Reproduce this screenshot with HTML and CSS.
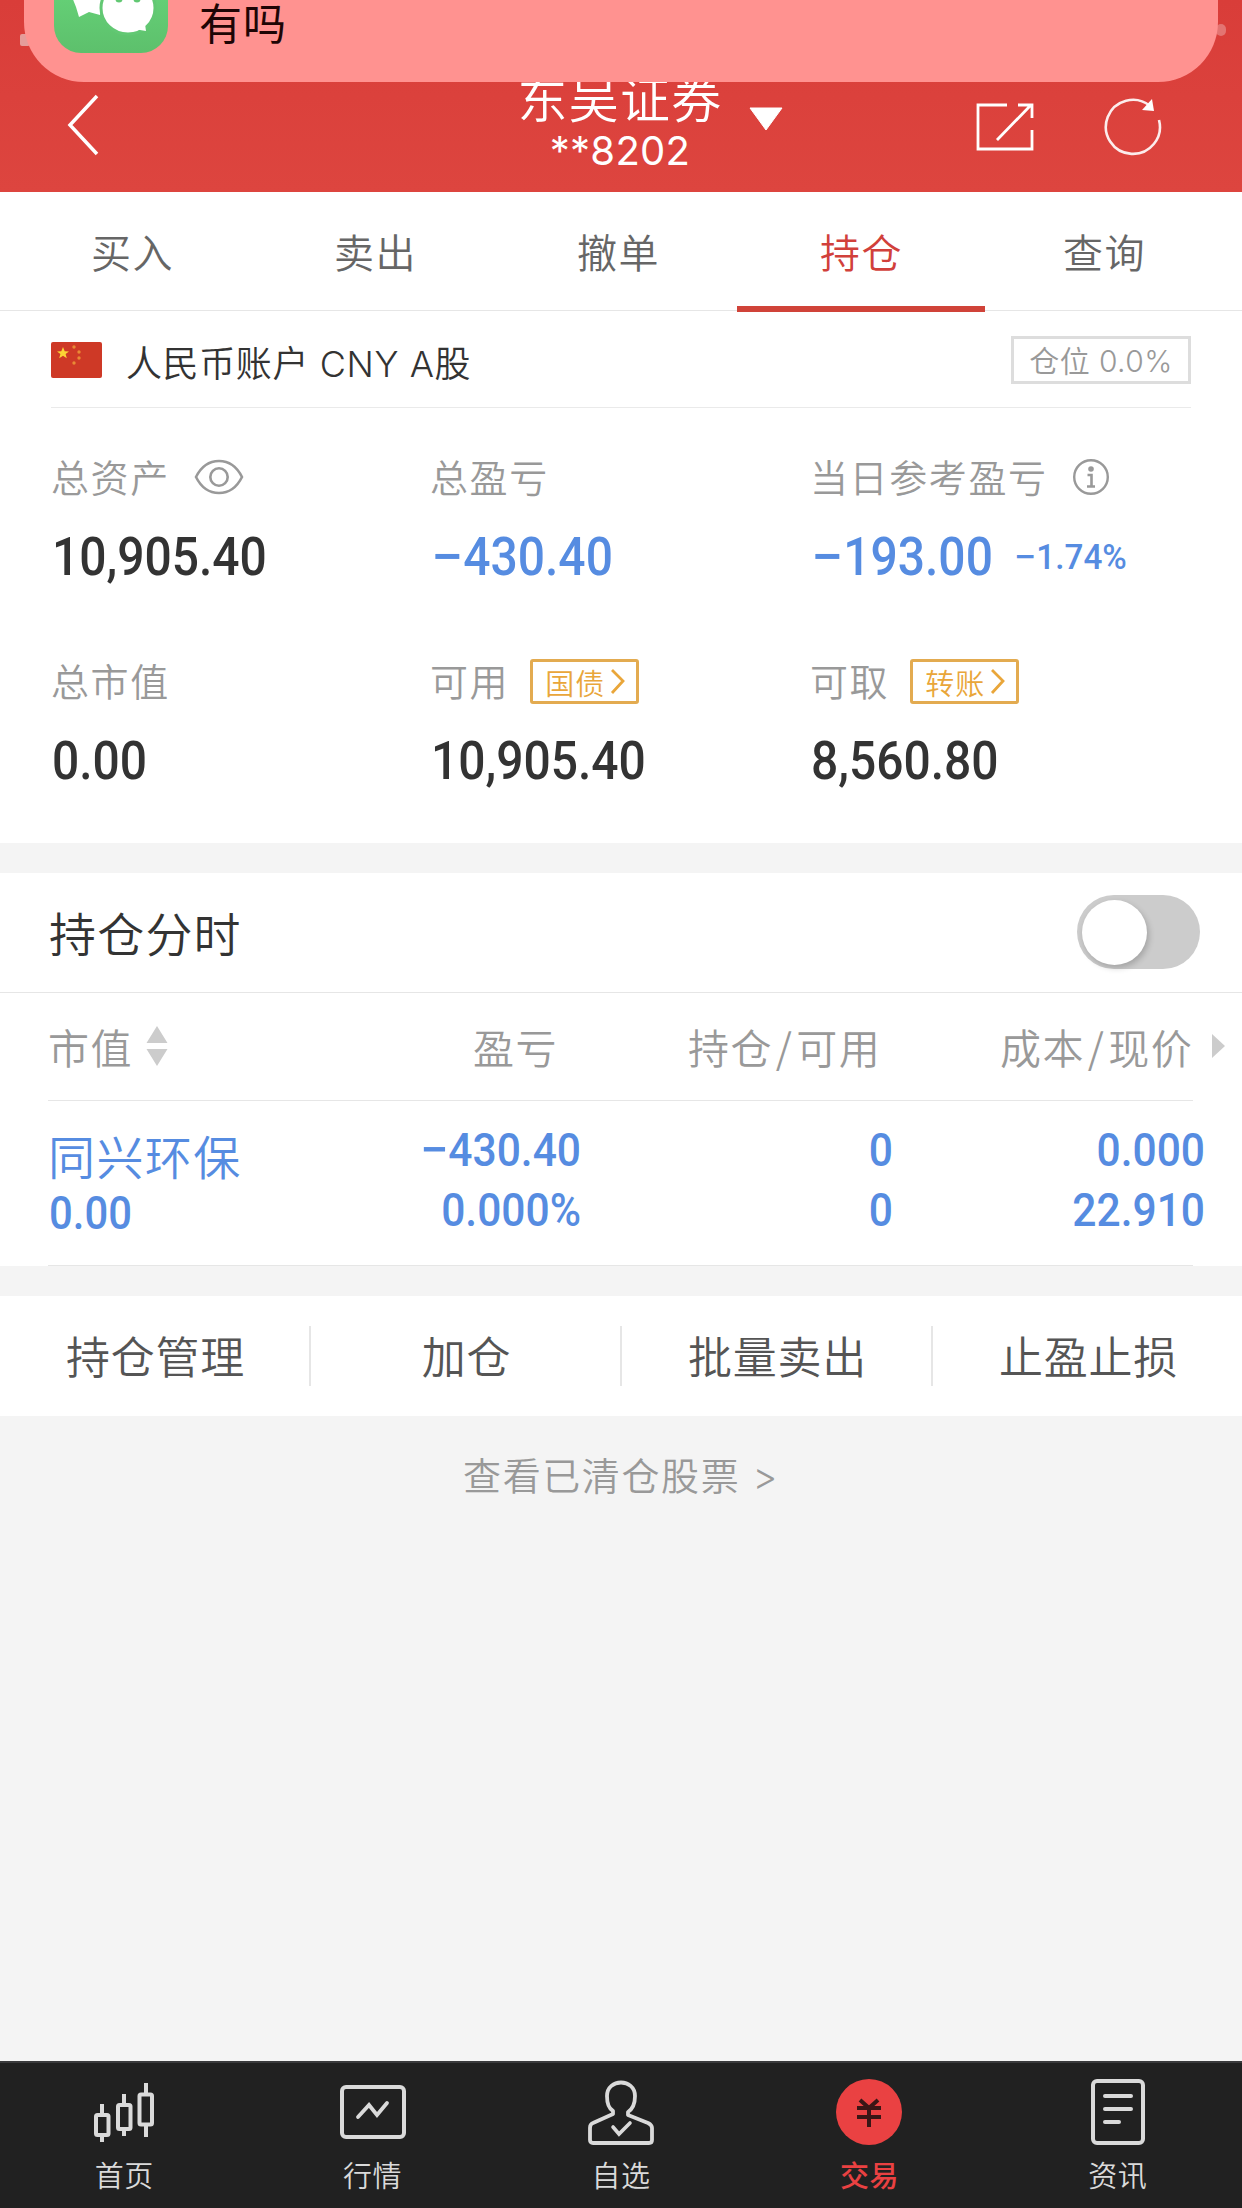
FILE: index.html
```
<!DOCTYPE html>
<html lang="zh-CN">
<head>
    <meta charset="UTF-8">
    <meta name="viewport" content="width=device-width, initial-scale=1.0">
    <title>持仓</title>
    <link rel="stylesheet" href="styles.css">
</head>
<body>

    <!-- Title bar -->
    <header class="header">
        <svg class="back" width="34" height="64" viewBox="0 0 34 64"><path d="M32 3 5 32 32 61" fill="none" stroke="#fff" stroke-width="3.5"/></svg>
        <div class="title">
            <div class="broker">东吴证券</div>
            <div class="account-no">**8202</div>
        </div>
        <svg class="caret" width="34" height="24" viewBox="0 0 34 24"><path d="M1 1H33L17 23Z" fill="#fff" stroke="#fff" stroke-linejoin="round"/></svg>
        <svg class="share" width="58" height="50" viewBox="0 0 58 50"><path d="M31 3H2V47H56V28M56 16V3H42M54 4 21 38" fill="none" stroke="#fff" stroke-width="2.8"/></svg>
        <svg class="refresh" width="60" height="60" viewBox="0 0 60 60"><path d="M57 24A27 27 0 1 1 48 10" fill="none" stroke="#fff" stroke-opacity=".9" stroke-width="2.6"/><path d="M50 3 52 15 40 14Z" fill="#fff"/></svg>
    </header>

    <!-- Message banner sliding over the title bar -->
    <span class="status-dot left"></span>
    <span class="status-dot right"></span>
    <div class="banner">
        <div class="app-icon">
            <svg width="114" height="114" viewBox="0 0 114 114">
                <path d="M18 58 22 68 25 78 35 73 46 76 50 58Z" fill="#fff"/>
                <ellipse cx="74" cy="69" rx="27" ry="26" fill="#fff" stroke="#62c873" stroke-width="3"/>
                <path d="M80 90 92 92 90 78Z" fill="#fff"/>
                <circle cx="65" cy="60" r="3.5" fill="#62c873"/>
                <circle cx="83" cy="60" r="3.5" fill="#62c873"/>
            </svg>
        </div>
        <div class="message">有吗</div>
    </div>

    <nav class="tabs">
        <div class="tab">买入</div>
        <div class="tab">卖出</div>
        <div class="tab">撤单</div>
        <div class="tab active">持仓</div>
        <div class="tab">查询</div>
    </nav>

    <section class="account">
        <svg class="flag" width="51" height="36" viewBox="0 0 51 36">
            <rect width="51" height="36" rx="2" fill="#ce3926"/>
            <path d="M12 5 13.7 9.2 18 9.4 14.6 12 15.8 16.3 12 13.8 8.2 16.3 9.4 12 6 9.4 10.3 9.2Z" fill="#fbd535"/>
            <g fill="#e98a35"><circle cx="23" cy="5" r="1.7"/><circle cx="28" cy="10" r="1.7"/><circle cx="28" cy="16" r="1.7"/><circle cx="23" cy="21" r="1.7"/></g>
        </svg>
        <div class="account-name">人民币账户 CNY A股</div>
        <div class="position-badge">仓位 0.0%</div>
    </section>

    <section class="summary">
        <div class="item">
            <div class="label">总资产
                <svg class="eye" width="50" height="36" viewBox="0 0 50 36"><g fill="none" stroke="#999" stroke-width="2.6"><path d="M2 18C7 8 15 2 25 2S43 8 48 18C43 28 35 34 25 34S7 28 2 18Z"/><circle cx="25" cy="18" r="8.7"/></g></svg>
            </div>
            <div class="value"><span class="num">10,905.40</span></div>
        </div>
        <div class="item">
            <div class="label">总盈亏</div>
            <div class="value blue"><span class="num"><i>−</i>430.40</span></div>
        </div>
        <div class="item">
            <div class="label">当日参考盈亏
                <svg class="info" width="38" height="38" viewBox="0 0 38 38"><circle cx="19" cy="19" r="16.8" fill="none" stroke="#999" stroke-width="2.4"/><circle cx="19" cy="11" r="2.8" fill="#999"/><path d="M15.5 17H19.5V28M15 28.5H23" fill="none" stroke="#999" stroke-width="2.6"/></svg>
            </div>
            <div class="value blue"><span class="num"><i>−</i>193.00</span><span class="num percent"><i>−</i>1.74%</span></div>
        </div>
        <div class="item">
            <div class="label">总市值</div>
            <div class="value"><span class="num">0.00</span></div>
        </div>
        <div class="item">
            <div class="label">可用
                <span class="link">国债<svg width="16" height="30" viewBox="0 0 16 30"><path d="M3 3 14 14 3 26" fill="none" stroke="#e9a63a" stroke-width="2.8"/></svg></span>
            </div>
            <div class="value"><span class="num">10,905.40</span></div>
        </div>
        <div class="item">
            <div class="label">可取
                <span class="link">转账<svg width="16" height="30" viewBox="0 0 16 30"><path d="M3 3 14 14 3 26" fill="none" stroke="#e9a63a" stroke-width="2.8"/></svg></span>
            </div>
            <div class="value"><span class="num">8,560.80</span></div>
        </div>
    </section>

    <!-- Holdings -->
    <section class="holdings">
        <div class="chart-row">
            <div>持仓分时</div>
            <div class="switch"><div class="knob"></div></div>
        </div>
        <div class="columns">
            <div class="col-name">市值
                <svg width="22" height="40" viewBox="0 0 22 40"><path d="M11 0 21.5 17H.5ZM11 40 .5 23H21.5Z" fill="#ccc"/></svg>
            </div>
            <div class="col-profit">盈亏</div>
            <div class="col-amount">持仓<i>/</i>可用</div>
            <div class="col-cost">成本<i>/</i>现价</div>
            <svg class="more" width="13" height="24" viewBox="0 0 13 24"><path d="M0 0 13 12 0 24Z" fill="#ccc"/></svg>
        </div>
        <div class="stock">
            <div class="stock-name">
                <div class="name">同兴环保</div>
                <div class="num">0.00</div>
            </div>
            <div class="stock-profit">
                <div class="num"><i>−</i>430.40</div>
                <div class="num">0.000%</div>
            </div>
            <div class="stock-amount">
                <div class="num">0</div>
                <div class="num">0</div>
            </div>
            <div class="stock-cost">
                <div class="num">0.000</div>
                <div class="num">22.910</div>
            </div>
        </div>
    </section>

    <section class="actions">
        <div class="action">持仓管理</div>
        <div class="action">加仓</div>
        <div class="action">批量卖出</div>
        <div class="action">止盈止损</div>
    </section>

    <div class="cleared">查看已清仓股票 &gt;</div>

    <!-- Bottom navigation -->
    <footer class="footer">
        <div class="nav">
            <svg width="66" height="80" viewBox="0 0 66 80"><g fill="none" stroke="#dadada" stroke-width="4"><rect x="5" y="38" width="12.5" height="20" rx="1.5"/><rect x="27" y="28" width="12.5" height="24" rx="1.5"/><rect x="48.5" y="17.5" width="12.5" height="30" rx="1.5"/><path d="M11 27V38M11 58V65M33 17V28M33 52V59M55 6V17M55 48V60"/></g></svg>
            <span>首页</span>
        </div>
        <div class="nav">
            <svg width="66" height="80" viewBox="0 0 66 80"><rect x="2" y="10" width="62" height="50" rx="4" fill="none" stroke="#dadada" stroke-width="4"/><path d="M18 40 29 28 37 38 47 26" fill="none" stroke="#dadada" stroke-width="3.8" stroke-linecap="round"/></svg>
            <span>行情</span>
        </div>
        <div class="nav">
            <svg width="66" height="80" viewBox="0 0 66 80"><path d="M5 66Q2 66 2 63V51Q2 47 5 46L25 37V34C20 31 19 24 19 19 19 1 47 1 47 19 47 24 46 31 40 35V38L60 46Q64 48 64 51V63Q64 66 61 66Z" fill="none" stroke="#dadada" stroke-width="3.8" stroke-linejoin="round"/><path d="M25 50 31 57 42 46" fill="none" stroke="#dadada" stroke-width="3.6" stroke-linecap="round"/></svg>
            <span>自选</span>
        </div>
        <div class="nav active">
            <svg width="66" height="80" viewBox="0 0 66 80"><circle cx="33" cy="35" r="33" fill="#ea4142"/><path d="M24 23 33 31 42 23M21 31H45M21 40H45M33 31V50" fill="none" stroke="#3a1616" stroke-width="4"/></svg>
            <span>交易</span>
        </div>
        <div class="nav">
            <svg width="66" height="80" viewBox="0 0 66 80"><rect x="8" y="4" width="50" height="62" rx="4" fill="none" stroke="#dadada" stroke-width="4"/><path d="M20 19H46M20 32H46M20 45H34" stroke="#dadada" stroke-width="4" stroke-linecap="round"/></svg>
            <span>资讯</span>
        </div>
    </footer>

</body>
</html>
```
FILE: styles.css
```
* {
    box-sizing: border-box;
}

body {
    margin: 0;
    width: 1242px;
    height: 2208px;
    display: flex;
    flex-direction: column;
    position: relative;
    overflow: hidden;
    background: #f4f4f4;
    color: #333;
    font-family: "Noto Sans CJK SC", sans-serif;
    font-weight: 350;
}

svg {
    display: block;
    flex: none;
}

i {
    font-style: normal;
}

.header {
    height: 192px;
    padding: 93px 78px 0 65px;
    display: flex;
    align-items: flex-start;
    background: linear-gradient(#d93d39, #dd453f);
    color: #fff;
}

.title {
    width: 206px;
    margin: -22px 0 0 418px;
    text-align: center;
}

.broker {
    height: 52px;
    line-height: 50px;
    font-size: 50px;
    letter-spacing: 1.3px;
    white-space: nowrap;
}

.account-no {
    margin-top: 2px;
    height: 52px;
    line-height: 52px;
    font-family: Inter, sans-serif;
    font-size: 40px;
    letter-spacing: .3px;
    font-weight: 400;
}

.caret {
    margin: 14px 0 0 26px;
}

.share {
    margin: 9px 0 0 193px;
}

.refresh {
    margin: 3px 0 0 68px;
}

.banner {
    position: absolute;
    left: 24px;
    top: -100px;
    width: 1194px;
    height: 182px;
    border-radius: 60px;
    background: #ff9290;
    display: flex;
    overflow: hidden;
}

.app-icon {
    width: 114px;
    height: 114px;
    margin: 39px 0 0 30px;
    border-radius: 27px;
    background: linear-gradient(#6cdf80, #5dc06c);
}

.message {
    margin: 94px 0 0 31px;
    height: 54px;
    line-height: 54px;
    font-size: 43px;
    letter-spacing: 1px;
    color: #1e0505;
    font-weight: 400;
}

.status-dot {
    position: absolute;
    top: 34px;
    left: 20px;
    width: 10px;
    height: 12px;
    border-radius: 2px;
    background: #e59c9a;
}

.status-dot.right {
    top: 24px;
    left: 1216px;
    border-radius: 6px;
    background: #e37472;
}

.tabs {
    height: 119px;
    padding: 0 16px 0 11px;
    display: flex;
    background: #fff;
    border-bottom: 1px solid #e6e6e6;
}

.tab {
    flex: 1;
    position: relative;
    line-height: 118px;
    text-align: center;
    font-size: 40px;
    letter-spacing: 1.5px;
    color: #666;
}

.tab.active {
    color: #d1403b;
}

.tab.active::after {
    content: "";
    position: absolute;
    left: -3px;
    right: -2px;
    bottom: -2px;
    height: 6px;
    background: #d04339;
}

.account {
    height: 97px;
    padding: 0 51px;
    display: flex;
    align-items: center;
    background: linear-gradient(#eaeaea, #eaeaea) 51px 96px / 1140px 1px no-repeat #fff;
}

.account-name {
    margin: 2px 0 0 24px;
    font-family: Inter, "Noto Sans CJK SC", sans-serif;
    font-size: 36px;
    letter-spacing: .6px;
}

.position-badge {
    margin-left: auto;
    width: 180px;
    height: 48px;
    border: 3px solid #ddd;
    line-height: 44px;
    text-align: center;
    font-family: Inter, "Noto Sans CJK SC", sans-serif;
    font-size: 30px;
    letter-spacing: .4px;
    color: #999;
}

.num {
    display: inline-block;
    font-family: Roboto, "Liberation Sans", sans-serif;
    font-weight: 500;
    white-space: nowrap;
    transform: scaleX(.905);
    transform-origin: left;
}

.num i {
    display: inline-block;
    margin-right: .11em;
    transform: scaleX(1.2);
    transform-origin: left;
}

.summary {
    height: 435px;
    padding: 40px 0 0 51px;
    display: grid;
    grid-template-columns: 379px 380px 1fr;
    grid-auto-rows: 204px;
    background: #fff;
}

.label {
    height: 56px;
    line-height: 54px;
    display: flex;
    align-items: center;
    font-size: 38px;
    letter-spacing: 1.6px;
    color: #999;
}

.eye {
    margin: 2px 0 0 24px;
}

.info {
    margin: 2px 0 0 24px;
}

.link {
    width: 109px;
    height: 45px;
    margin: 3px 0 0 21px;
    padding-left: 12px;
    line-height: 38px;
    display: flex;
    align-items: center;
    border: 3px solid #e3ab50;
    border-radius: 3px;
    font-size: 29px;
    letter-spacing: 1px;
    color: #e9a63a;
}

.link svg {
    margin-left: 4px;
}

.value {
    height: 106px;
    display: flex;
    align-items: center;
    font-size: 53px;
}

.value .num {
    margin-left: 1px;
}

.blue {
    color: #568ce1;
}

.value .percent {
    font-size: 35px;
    margin-left: 2px;
    transform: scaleX(.95);
}

.holdings {
    margin-top: 30px;
    height: 393px;
    background: #fff;
}

.chart-row {
    height: 120px;
    padding: 0 42px 1px 49px;
    display: flex;
    justify-content: space-between;
    align-items: center;
    border-bottom: 1px solid #e6e6e6;
    line-height: 58px;
    font-size: 47px;
    letter-spacing: 1.2px;
}

.switch {
    width: 123px;
    height: 74px;
    padding: 5px;
    border-radius: 37px;
    background: #ccc;
}

.knob {
    width: 65px;
    height: 65px;
    border-radius: 50%;
    background: #fff;
    box-shadow: 2px 3px 6px rgba(0, 0, 0, 0.2);
}

.columns {
    height: 108px;
    margin: 0 17px 0 48px;
    display: flex;
    align-items: center;
    background: linear-gradient(#e6e6e6, #e6e6e6) 0 107px / 1145px 1px no-repeat;
    line-height: 50px;
    padding-bottom: 2px;
    font-size: 41px;
    letter-spacing: 1.4px;
    color: #999;
}

.columns i {
    margin: 0 3px;
}

.col-name {
    width: 425px;
    display: flex;
    align-items: center;
}

.col-name svg {
    margin-left: 13px;
}

.col-profit {
    width: 215px;
}

.col-amount {
    width: 312px;
}

.col-cost {
    width: 212px;
}

.stock {
    height: 165px;
    margin: 0 38px 0 48px;
    padding-top: 19px;
    display: flex;
    font-size: 47px;
    color: #568ce1;
    background: linear-gradient(#e6e6e6, #e6e6e6) 0 164px / 1145px 1px no-repeat;
}

.stock .num {
    display: block;
    height: 60px;
    line-height: 60px;
    transform-origin: right;
}

.stock .stock-name .num {
    height: 54px;
    line-height: 54px;
    margin-left: 1px;
    transform: scaleX(.89);
    transform-origin: left;
}

.name {
    height: 66px;
    line-height: 70px;
    letter-spacing: 1.4px;
}

.stock-name {
    width: 260px;
}

.stock-profit {
    width: 273px;
    text-align: right;
}

.stock-amount {
    width: 312px;
    text-align: right;
}

.stock-cost {
    width: 312px;
    margin-right: -1px;
    text-align: right;
}

.actions {
    margin-top: 30px;
    height: 120px;
    display: flex;
    align-items: center;
    background: #fff;
    font-size: 44px;
    color: #555;
}

.action {
    flex: 1;
    height: 60px;
    line-height: 58px;
    padding-left: 2px;
    text-align: center;
    letter-spacing: .8px;
    border-right: 2px solid #e6e6e6;
}

.action:last-child {
    border-right: none;
}

.cleared {
    margin-top: 31px;
    height: 60px;
    line-height: 58px;
    text-align: center;
    font-family: Inter, "Noto Sans CJK SC", sans-serif;
    font-size: 38px;
    letter-spacing: 1.6px;
    color: #999;
}

.footer {
    margin-top: auto;
    height: 147px;
    display: flex;
    border-top: 2px solid #3a3a3c;
    background: #212121;
}

.nav {
    flex: 1;
    padding-top: 14px;
    display: flex;
    flex-direction: column;
    align-items: center;
    color: #dadada;
}

.nav span {
    height: 36px;
    line-height: 34px;
    font-size: 29px;
    letter-spacing: .5px;
}

.nav.active span {
    color: #ea4142;
    font-weight: 500;
}
```
